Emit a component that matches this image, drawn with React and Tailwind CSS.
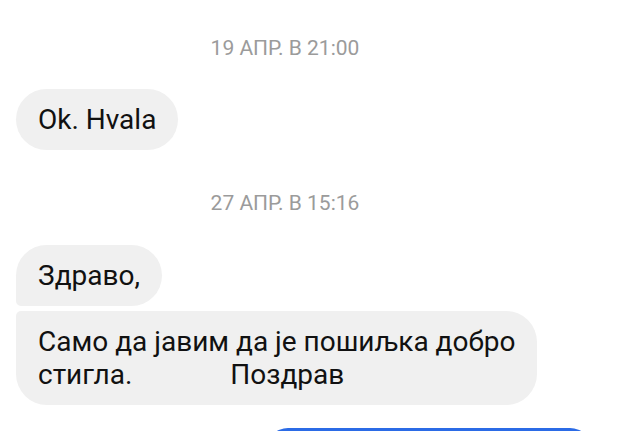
import React from 'react';

const Stamp = ({ children, className = '' }) => (
  <div className={`mr-[72px] text-center text-[21px] leading-[24px] text-[#9b9b9b] ${className}`}>
    {children}
  </div>
);

const Bubble = ({ children, className = '' }) => (
  <div className={`self-start bg-[#f0f0f0] px-[22px] py-[14px] text-[28px] leading-[33px] text-[#111] ${className}`}>
    {children}
  </div>
);

export default function App() {
  return (
    <div
      className="h-[431px] w-full overflow-hidden bg-white"
      style={{ fontFamily: 'Roboto, "Noto Sans", sans-serif' }}
    >
      <div className="flex flex-col px-4 pt-[36px]">
        <Stamp>19 АПР. В 21:00</Stamp>

        <Bubble className="mt-[29px] rounded-[31px]">Ok. Hvala</Bubble>

        <Stamp className="mt-[41px]">27 АПР. В 15:16</Stamp>

        <Bubble className="mt-[30px] rounded-[31px] rounded-bl-[5px]">Здраво,</Bubble>
        <Bubble className="mt-[5px] rounded-[31px] rounded-tl-[5px]">
          <div>Само да јавим да је пошиљка добро</div>
          <div>
            стигла.<span className="ml-[98px]">Поздрав</span>
          </div>
        </Bubble>

        <div className="mt-[23px] ml-[250px] h-[60px] w-[326px] rounded-[22px] bg-[#2b6be6]" />
      </div>
    </div>
  );
}
